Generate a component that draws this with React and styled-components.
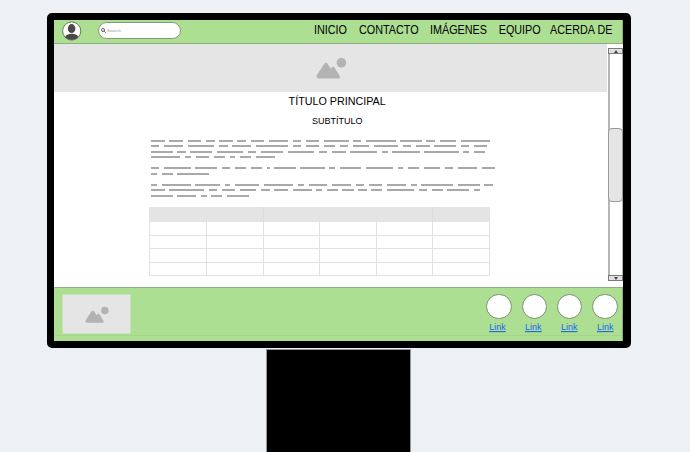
import React from "react";
import styled, { createGlobalStyle } from "styled-components";

const GlobalStyle = createGlobalStyle`
  * { box-sizing: border-box; }
  body {
    margin: 0;
    background: #edf1f6;
    font-family: "Liberation Sans", Arial, sans-serif;
    color: #000;
    overflow: hidden;
  }
`;

const Desk = styled.main`
  width: 690px;
  height: 452px;
  padding: 13px 0 0 47px;
  overflow: hidden;
`;

const Monitor = styled.div`
  width: 584px;
  height: 335px;
  border: 7px solid #000;
  border-right-width: 8px;
  border-radius: 5px;
  background: #fff;
  display: flex;
  flex-direction: column;
`;

const Stand = styled.div`
  width: 145px;
  height: 104px;
  margin: 1px 0 0 219px;
  background: #000;
  border: 1px solid #929795;
  border-bottom: 0;
`;

const Header = styled.header`
  height: 24px;
  flex: none;
  display: flex;
  align-items: flex-start;
  background: #addf93;
  border: solid #90ad82;
  border-width: 0 1px 1px 0;
`;

const Avatar = styled.svg`
  width: 20px;
  height: 20px;
  margin: 1px 0 0 8px;
  flex: none;
`;

const Search = styled.div`
  width: 83px;
  height: 17px;
  margin: 2px 1px 0 16px;
  padding-left: 2px;
  display: flex;
  align-items: center;
  border: 1px solid #829877;
  border-radius: 9px;
  background: #fff;
  color: #999;
  font-size: 4.4px;
  svg { width: 5px; height: 5px; margin-right: 1px; }
`;

const Nav = styled.nav`
  display: flex;
  margin-left: 132px;
  padding-top: 4px;
`;

const NavItem = styled.a`
  width: ${(p) => p.$width}px;
  flex: none;
  font-size: 10.8px;
  line-height: 13px;
  white-space: nowrap;
  transform: scaleY(1.1);
  transform-origin: 0 80%;
`;

const Body = styled.div`
  flex: 1;
  min-height: 0;
  display: flex;
`;

const Content = styled.section`
  width: 553px;
  flex: none;
  display: flex;
  flex-direction: column;
`;

const Banner = styled.div`
  height: 48px;
  flex: none;
  padding: 13px 0 0 262px;
  background: #e5e5e5;
`;

const Picture = styled.svg`
  display: block;
  width: ${(p) => p.$width}px;
  height: ${(p) => p.$height}px;
`;

const Title = styled.h1`
  margin: 2px 0 0 234.6px;
  font-size: 10.75px;
  line-height: 14px;
  font-weight: 400;
  transform: scaleY(1.1);
  transform-origin: 0 80%;
`;

const Subtitle = styled.h2`
  margin: 6px 0 0 258px;
  font-size: 9px;
  line-height: 14px;
  font-weight: 400;
  transform: scaleY(1.1);
  transform-origin: 0 80%;
`;

const Copy = styled.div`
  margin: 12px 0 0 97px;
`;

const Line = styled.div`
  height: 2px;
  margin-top: ${(p) => p.$gap}px;
  display: flex;
`;

const Word = styled.span`
  flex: none;
  height: 2px;
  width: ${(p) => p.$width}px;
  margin-left: ${(p) => p.$space}px;
  background: #a9a9a9;
`;

const Table = styled.div`
  width: 341px;
  margin: 10px 0 0 95px;
  display: grid;
  grid-template-columns: 58px 57px 56px 57px 56px 57px;
  grid-template-rows: 15px 14px 13px 14px 13px;
`;

const Cell = styled.div`
  border: solid #e2e2e2;
  border-width: 0 1px 1px ${(p) => (p.$first ? 1 : 0)}px;
`;

const HeadCell = styled.div`
  background: #e4e4e4;
  border-right: 1px solid ${(p) => (p.$strong ? "#dadada" : "#e3e3e3")};
`;

const Scrollbar = styled.div`
  width: 15px;
  height: 233px;
  margin: 4px 0 0 1px;
  flex: none;
  display: flex;
  flex-direction: column;
  border: solid #b5b5b5;
  border-width: 0 1px 0 2px;
`;

const Arrow = styled.div`
  height: 6px;
  margin: 0 -1px 0 -2px;
  border: 1px solid #7a7a7a;
  background: #e0e0e0;
  display: flex;
  align-items: center;
  justify-content: center;
  svg { width: 4px; height: 3px; }
`;

const Thumb = styled.div`
  height: 74px;
  margin: 74px -1px auto -2px;
  border: 1px solid #999;
  border-radius: 4px;
  background: #e5e5e5;
`;

const Footer = styled.footer`
  height: 54px;
  flex: none;
  display: flex;
  background: linear-gradient(#addf93 47px, #a4d58b 47px, #a4d58b 48px, #addf93 48px);
  border: solid #92ad86;
  border-width: 1px 1px 0 0;
`;

const Thumbnail = styled.div`
  width: 69px;
  height: 40px;
  margin: 6px 0 0 8px;
  padding: 11px 0 0 22px;
  background: #e5e5e5;
  border: 1px solid #c8e1bb;
`;

const Links = styled.div`
  display: flex;
  margin: 6px 0 0 355.4px;
`;

const LinkItem = styled.div`
  width: ${(p) => p.$width}px;
  flex: none;
`;

const Circle = styled.div`
  width: 25.4px;
  height: 25.4px;
  border: 1px solid #76926b;
  border-radius: 50%;
  background: #fff;
`;

const LinkText = styled.a`
  display: block;
  margin: 2.6px 0 0 ${(p) => p.$indent}px;
  font-size: 9px;
  line-height: 10px;
  color: #1c62ed;
  text-decoration: underline;
  transform: scaleY(1.08);
  transform-origin: 0 80%;
`;

// Each line: gap above in pixels, then the start/end of every word in thirds of a pixel.
const lines = [
  [0, "33-75 87-129 144-183 198-223 237-279 291-318 333-372 387-444 459-483 498-537 552-627 639-663 678-768 780-846 858-885 900-948 963-1050"],
  [3, "33-57 72-129 144-222 237-264 276-333 348-444 459-483 498-537 552-585 600-624 639-687 702-774 789-813 828-870 882-948 963-987 1002-1041"],
  [4, "33-97 111-138 150-216 231-309 324-348 363-429 442-522 537-561 576-618 630-711 726-744 756-838 852-957 969-987 1002-1035"],
  [3, "33-120 135-153 166-207 222-255 270-285 300-333 348-405"],
  [9, "33-57 72-153 165-231 246-270 285-318 333-366 381-390 402-468 480-555 567-585 600-663 678-759 774-789 804-837 852-900 915-939 954-1011 1026-1065"],
  [4, "33-51 66-97 111-207"],
  [9, "33-51 66-153 165-240 255-270 285-357 372-459 474-492 506-561 576-633 648-672 687-726 741-798 813-831 843-939 954-1020 1032-1059"],
  [3, "33-75 87-192 207-231 246-285 300-348 363-390 402-444 459-516 528-546 561-594 606-642 654-681 693-726 741-822 837-861 876-909 921-987 1002-1020"],
  [4, "33-97 111-168 183-201 213-246 261-327"],
].map(([gap, spans]) => {
  let previous = 32;
  const words = spans.split(" ").map((span) => {
    const [start, end] = span.split("-").map(Number);
    const word = { space: (start - previous) / 3, width: (end - start) / 3 };
    previous = end;
    return word;
  });
  return { gap, words };
});

const navItems = [
  ["INICIO", 45],
  ["CONTACTO", 71],
  ["IMÁGENES", 68.7],
  ["EQUIPO", 51.3],
  ["ACERDA DE", 64],
];

const linkItems = [
  [35.3, 2.8],
  [35.3, 3.4],
  [35.4, 4],
  [26, 4.6],
];

function Landscape({ width, height }) {
  return (
    <Picture $width={width} $height={height} viewBox="0 0 32 23" preserveAspectRatio="none">
      <path
        d="M3 21.5h19q3 0 1.5-2.7l-4.8-8q-1.2-2-2.7-.4l-1.3 1.1-3-4.6q-1.7-2.5-3.5 0L1 18q-1.6 3.5 2 3.5Z"
        fill="#b3b3b3"
      />
      <circle cx="25.4" cy="5.8" r="4.8" fill="#b3b3b3" />
    </Picture>
  );
}

export default function App() {
  return (
    <Desk>
      <GlobalStyle />
      <Monitor>
        <Header>
          <Avatar viewBox="0 0 20 20">
            <circle cx="9.7" cy="10" r="9.1" fill="#fff" stroke="#697962" strokeWidth="1" />
            <ellipse cx="9.6" cy="7.6" rx="3.8" ry="4.5" fill="#484848" />
            <path d="M3 16.2Q4 12.7 9.7 12.7t6.7 3.5Q13.5 19 9.7 19T3 16.2Z" fill="#484848" />
          </Avatar>
          <Search>
            <svg viewBox="0 0 6 6" fill="none" stroke="#444" strokeWidth="1">
              <circle cx="2.4" cy="2.4" r="1.8" />
              <path d="m3.8 3.8 2 2" />
            </svg>
            Search
          </Search>
          <Nav>
            {navItems.map(([label, width]) => (
              <NavItem key={label} $width={width}>{label}</NavItem>
            ))}
          </Nav>
        </Header>
        <Body>
          <Content>
            <Banner><Landscape width={32} height={23} /></Banner>
            <Title>TÍTULO PRINCIPAL</Title>
            <Subtitle>SUBTÍTULO</Subtitle>
            <Copy>
              {lines.map((line, i) => (
                <Line key={i} $gap={line.gap}>
                  {line.words.map((word, j) => (
                    <Word key={j} $space={word.space} $width={word.width} />
                  ))}
                </Line>
              ))}
            </Copy>
            <Table>
              {[0, 1, 2, 3, 4, 5].map((n) => (
                <HeadCell key={n} $strong={n === 1 || n === 4} />
              ))}
              {Array.from({ length: 24 }, (_, n) => (
                <Cell key={n} $first={n % 6 === 0} />
              ))}
            </Table>
          </Content>
          <Scrollbar>
            <Arrow><svg viewBox="0 0 4 3"><path d="M0 3 2 0l2 3Z" fill="#444" /></svg></Arrow>
            <Thumb />
            <Arrow><svg viewBox="0 0 4 3"><path d="M0 0h4L2 3Z" fill="#444" /></svg></Arrow>
          </Scrollbar>
        </Body>
        <Footer>
          <Thumbnail><Landscape width={25} height={18} /></Thumbnail>
          <Links>
            {linkItems.map(([width, indent], i) => (
              <LinkItem key={i} $width={width}>
                <Circle />
                <LinkText $indent={indent}>Link</LinkText>
              </LinkItem>
            ))}
          </Links>
        </Footer>
      </Monitor>
      <Stand />
    </Desk>
  );
}
